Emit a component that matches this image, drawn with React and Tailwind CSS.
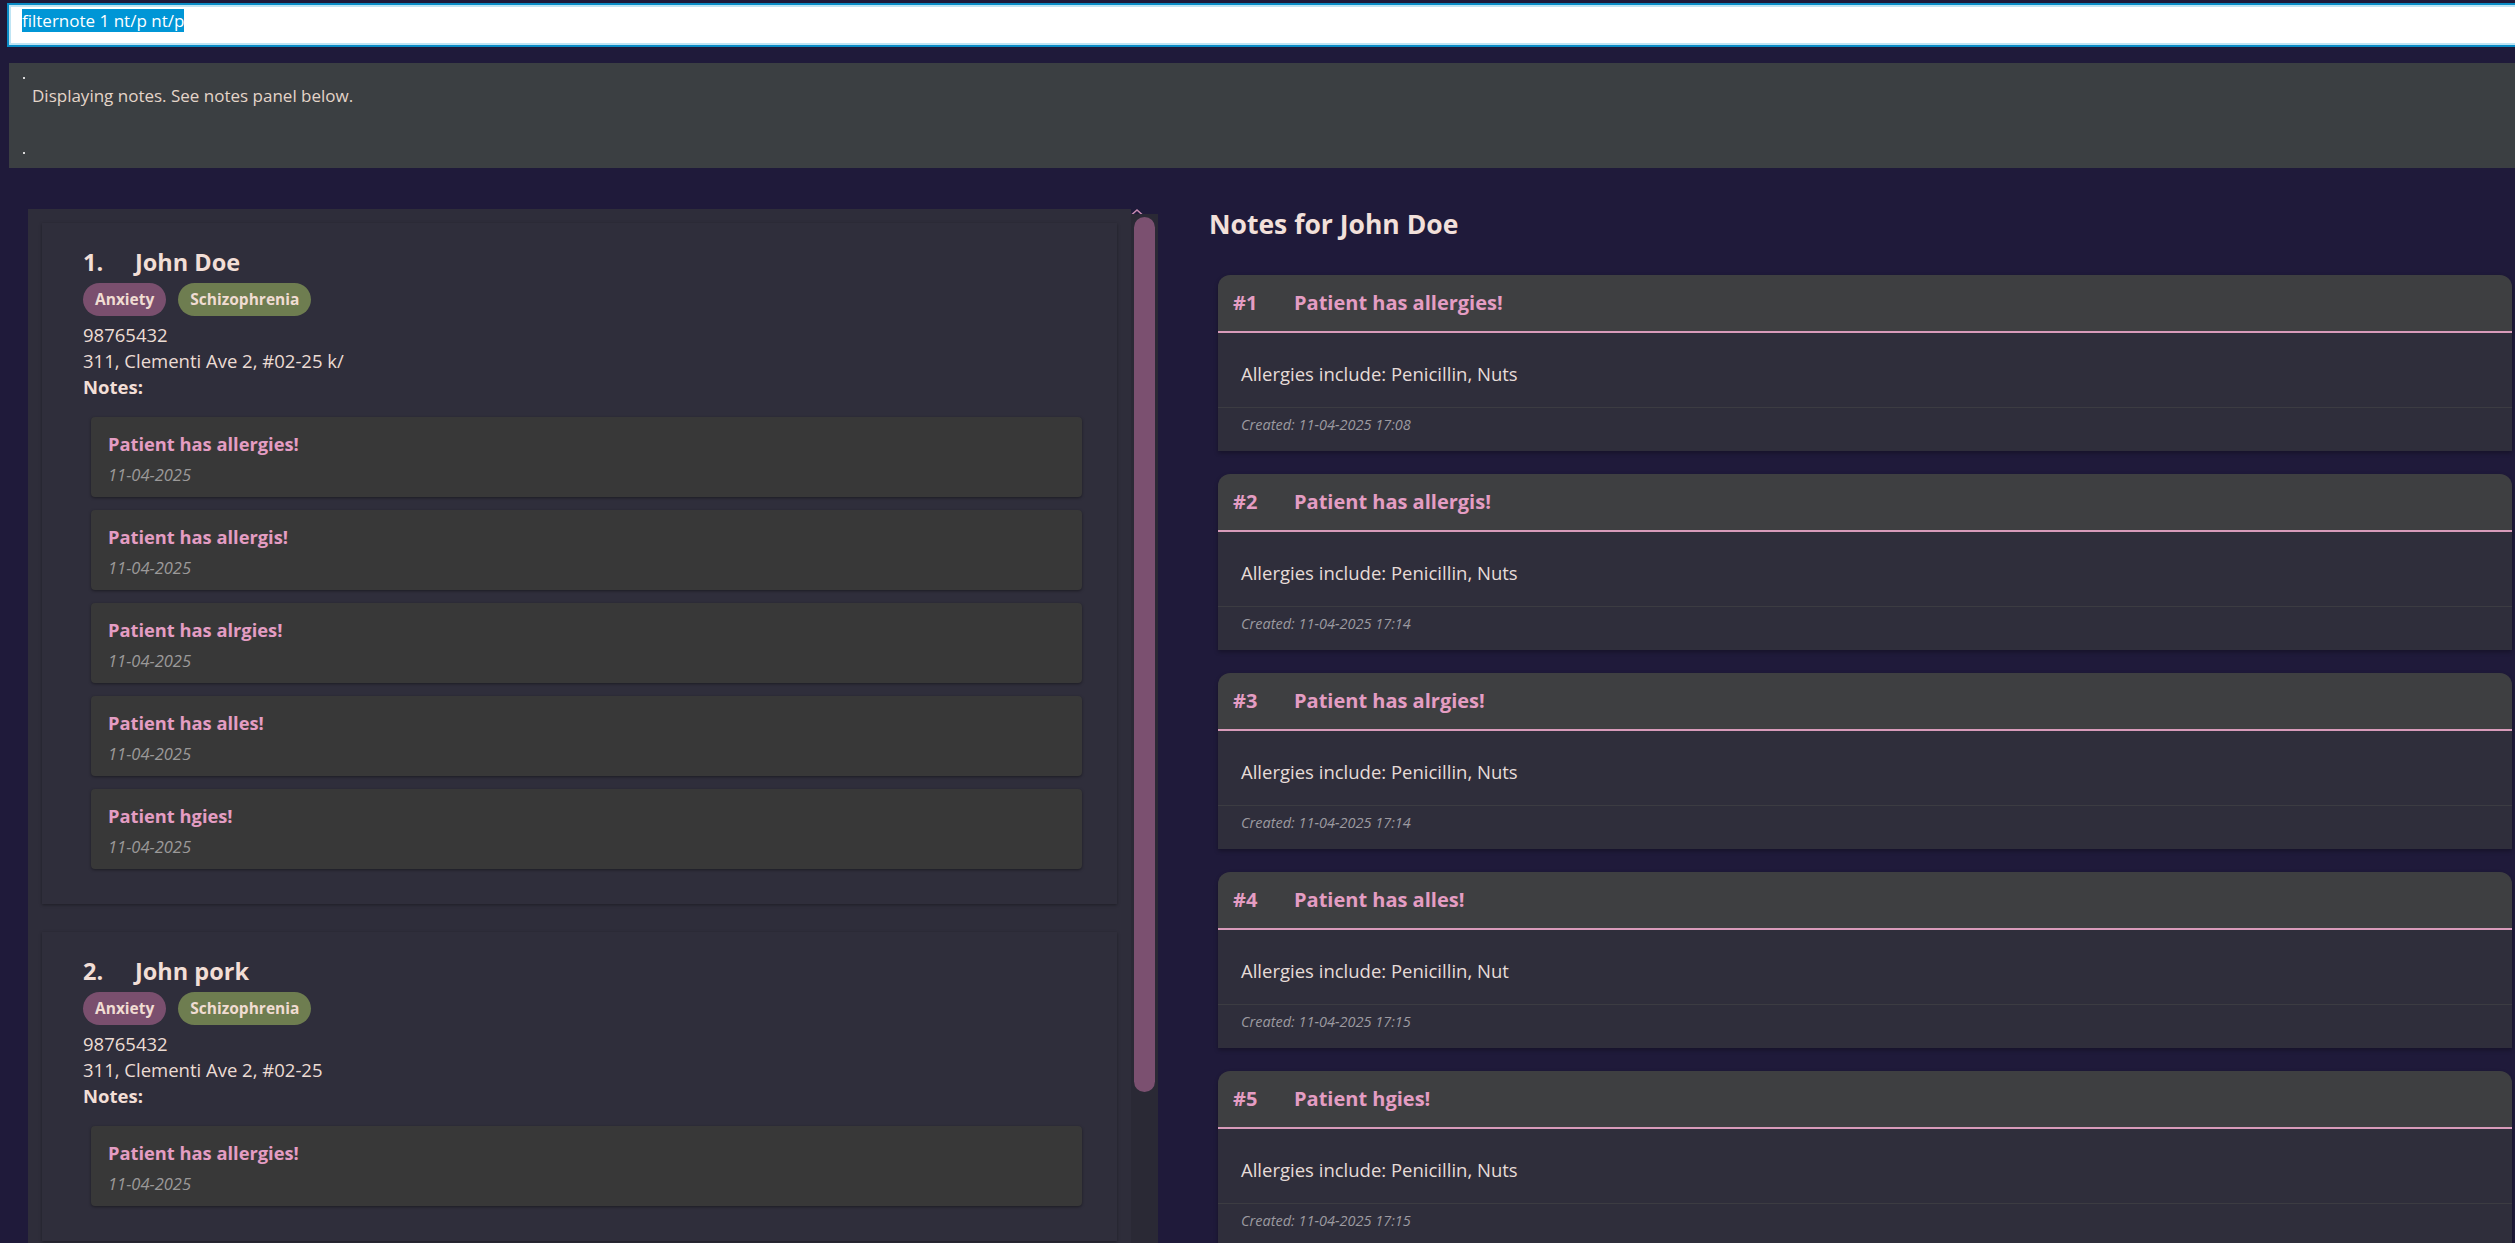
const patients = [
  {
    index: 1,
    name: 'John Doe',
    phone: '98765432',
    address: '311, Clementi Ave 2, #02-25 k/',
    notes: ['Patient has allergies!', 'Patient has allergis!', 'Patient has alrgies!', 'Patient has alles!', 'Patient hgies!'],
  },
  {
    index: 2,
    name: 'John pork',
    phone: '98765432',
    address: '311, Clementi Ave 2, #02-25',
    notes: ['Patient has allergies!'],
  },
];

const notes = [
  { id: 1, title: 'Patient has allergies!', body: 'Allergies include: Penicillin, Nuts', created: '11-04-2025 17:08' },
  { id: 2, title: 'Patient has allergis!', body: 'Allergies include: Penicillin, Nuts', created: '11-04-2025 17:14' },
  { id: 3, title: 'Patient has alrgies!', body: 'Allergies include: Penicillin, Nuts', created: '11-04-2025 17:14' },
  { id: 4, title: 'Patient has alles!', body: 'Allergies include: Penicillin, Nut', created: '11-04-2025 17:15' },
  { id: 5, title: 'Patient hgies!', body: 'Allergies include: Penicillin, Nuts', created: '11-04-2025 17:15' },
];

function PersonCell({ person }) {
  return (
    <div className="shrink-0 bg-[#2f2e3b] pl-[41px] pr-[35px] pt-[23px] pb-[35px] shadow-[0_1px_3px_rgba(0,0,0,0.35)]">
      {/* Name row */}
      <div className="flex text-[23.5px] font-bold leading-[32px] text-[#f2ded6]">
        <span className="w-[52px]">{person.index}.</span>
        <span>{person.name}</span>
      </div>
      {/* Tags */}
      <div className="mt-[5px] flex gap-[12px]">
        <span className="flex h-[33px] items-center rounded-full bg-[#7a4f6e] px-[12px] text-[15.5px] font-bold text-[#f0dcd2]">
          Anxiety
        </span>
        <span className="flex h-[33px] items-center rounded-full bg-[#6e7d50] px-[12px] text-[15.5px] font-bold text-[#f0dcd2]">
          Schizophrenia
        </span>
      </div>
      <div className="mt-[6px] text-[18.5px] leading-[26px] text-[#ecdcd4]">{person.phone}</div>
      <div className="text-[18.5px] leading-[26px] text-[#ecdcd4]">{person.address}</div>
      <div className="text-[18.5px] font-bold leading-[26px] text-[#f2ded6]">Notes:</div>
      {/* Note summaries */}
      <div className="ml-[8px] mt-[17px] flex flex-col gap-[13px]">
        {person.notes.map((title, i) => (
          <div
            key={i}
            className="h-[80px] rounded-[4px] bg-[#383838] pl-[17px] pt-[14px] shadow-[0_1px_3px_rgba(0,0,0,0.4)]"
          >
            <div className="text-[18.3px] font-bold leading-[26px] text-[#e49dc3]">{title}</div>
            <div className="mt-[7px] text-[16.5px] italic leading-[22px] text-[#9b9999]">11-04-2025</div>
          </div>
        ))}
      </div>
    </div>
  );
}

function NoteCard({ note }) {
  return (
    <div className="shrink-0 overflow-hidden rounded-t-[12px] shadow-[0_2px_4px_rgba(0,0,0,0.3)]">
      <div className="flex h-[58px] items-center border-b-2 border-[#d89bba] bg-[#3e3f41] pl-[15px] text-[20px] font-bold leading-[28px] text-[#e49dc3]">
        <span className="w-[61px]">#{note.id}</span>
        <span>{note.title}</span>
      </div>
      <div className="h-[75px] border-b border-[#3c3c42] bg-[#2f2e3b] pl-[23px] pt-[28px] text-[18.5px] leading-[26px] text-[#e6dcd8]">
        {note.body}
      </div>
      <div className="h-[43px] bg-[#2f2e3b] pl-[23px] pt-[7px] text-[14.5px] italic leading-[20px] text-[#9c9aa0]">
        Created: {note.created}
      </div>
    </div>
  );
}

export default function App() {
  return (
    <div className="flex h-screen flex-col overflow-hidden bg-[#1f1a3a] font-['Open_Sans',sans-serif]">
      {/* Command box */}
      <div className="-mr-[12px] ml-[7px] mt-[3px] h-[44px] shrink-0 border-2 border-[#0a8cc6] bg-white pl-[13px] pt-[4px] shadow-[inset_0_0_0_2px_#bfe5f4]">
        <span className="bg-[#0096d6] text-[17px] leading-[23px] text-white">filternote 1 nt/p nt/p</span>
      </div>

      {/* Result display */}
      <div className="-mr-[12px] ml-[9px] mt-[16px] flex h-[105px] shrink-0 flex-col bg-[#3b3f42] pl-[14px] pt-[14px]">
        <div className="h-[2px] w-[2px] bg-[#d8d8d8]" />
        <p className="ml-[9px] mt-[4px] text-[17px] leading-[26px] text-[#e4d5c9]">
          Displaying notes. See notes panel below.
        </p>
        <div className="mt-[43px] h-[2px] w-[2px] bg-[#d8d8d8]" />
      </div>

      {/* Main area */}
      <div className="mt-[41px] flex min-h-0 flex-1 pl-[28px] pr-[3px]">
        {/* Person list */}
        <div className="flex w-[1130px] shrink-0">
          <div className="flex w-[1103px] flex-col gap-[28px] overflow-hidden bg-[#2e2d3a] px-[14px] pt-[14px]">
            {patients.map(p => (
              <PersonCell key={p.index} person={p} />
            ))}
          </div>
          <div className="flex w-[27px] flex-col">
            <div className="h-[5px]">
              <svg width="12" height="6" viewBox="0 0 12 6" className="block overflow-visible">
                <path d="M1 5.5L6 1L11 5.5" fill="none" stroke="#c78bb0" strokeWidth="1.6" />
              </svg>
            </div>
            <div className="flex-1 bg-[#2a2935] px-[3px] pt-[3px]">
              <div className="h-[875px] rounded-full bg-[#7b5070]" />
            </div>
          </div>
        </div>

        {/* Notes panel */}
        <div className="ml-[51px] flex min-w-0 flex-1 flex-col">
          <h2 className="text-[26.5px] font-bold leading-[30px] text-[#f2e0da]">Notes for John Doe</h2>
          <div className="ml-[9px] mt-[36px] flex flex-col gap-[23px]">
            {notes.map(n => (
              <NoteCard key={n.id} note={n} />
            ))}
          </div>
        </div>
      </div>
    </div>
  );
}
